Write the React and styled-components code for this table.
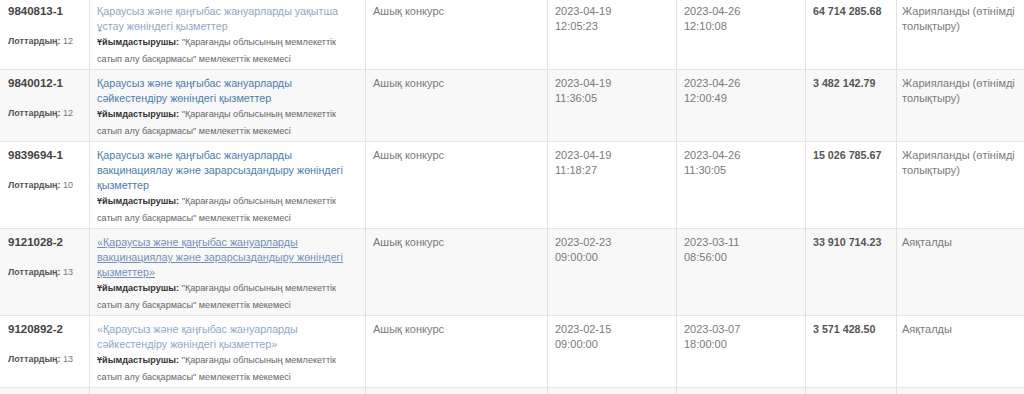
import React from "react";
import styled, { createGlobalStyle } from "styled-components";

const GlobalStyle = createGlobalStyle`
  html, body { margin: 0; padding: 0; background: #fff; overflow: hidden; }
  body { font-family: "Liberation Sans", Arial, sans-serif; }
`;

const Table = styled.table`
  width: 1040px;
  margin-top: -2px;
  border-collapse: separate;
  border-spacing: 0;
  table-layout: fixed;
  font-family: "Liberation Sans", Arial, sans-serif;
`;

const Row = styled.tr`
  background: ${(p) => (p.$striped ? "#f8f8f8" : "#ffffff")};
`;

const Cell = styled.td`
  vertical-align: top;
  padding: 6px 7px 1px 7px;
  border-right: 1px solid #e2e2e2;
  border-bottom: 1px solid #e6e6e6;
  font-size: 11px;
  line-height: 15px;
  color: #7a7a7a;
  &:first-child { padding-left: 8px; }
  &:last-child { padding-left: 5px; }
`;

const Code = styled.div`
  font-size: 11.5px;
  font-weight: bold;
  color: #444;
  line-height: 15px;
  margin-bottom: 14px;
`;

const Lots = styled.div`
  font-size: 9px;
  line-height: 17px;
  color: #777;
  b { color: #555; }
`;

const Title = styled.a`
  display: block;
  font-size: 10.75px;
  line-height: 15px;
  color: ${(p) =>
    p.$tone === "light" ? "#8ea8c6" : p.$tone === "visited" ? "#7290b8" : "#4a7db4"};
  text-decoration: ${(p) => (p.$tone === "visited" ? "underline" : "none")};
`;

const Org = styled.div`
  font-size: 9.1px;
  line-height: 17px;
  color: #666;
  b { color: #333; }
`;

const Amount = styled.span`
  font-size: 10.7px;
  font-weight: bold;
  color: #555;
`;

const rows = [
  {
    code: "9840813-1", lots: 12, tone: "light",
    title: "Қараусыз және қаңғыбас жануарларды уақытша ұстау жөніндегі қызметтер",
    start: ["2023-04-19", "12:05:23"], end: ["2023-04-26", "12:10:08"],
    amount: "64 714 285.68", status: "Жарияланды (өтінімді толықтыру)",
  },
  {
    code: "9840012-1", lots: 12, tone: "normal",
    title: "Қараусыз және қаңғыбас жануарларды сәйкестендіру жөніндегі қызметтер",
    start: ["2023-04-19", "11:36:05"], end: ["2023-04-26", "12:00:49"],
    amount: "3 482 142.79", status: "Жарияланды (өтінімді толықтыру)",
  },
  {
    code: "9839694-1", lots: 10, tone: "normal",
    title: "Қараусыз және қаңғыбас жануарларды вакцинациялау және зарарсыздандыру жөніндегі қызметтер",
    start: ["2023-04-19", "11:18:27"], end: ["2023-04-26", "11:30:05"],
    amount: "15 026 785.67", status: "Жарияланды (өтінімді толықтыру)",
  },
  {
    code: "9121028-2", lots: 13, tone: "visited",
    title: "«Қараусыз және қаңғыбас жануарларды вакцинациялау және зарарсыздандыру жөніндегі қызметтер»",
    start: ["2023-02-23", "09:00:00"], end: ["2023-03-11", "08:56:00"],
    amount: "33 910 714.23", status: "Аяқталды",
  },
  {
    code: "9120892-2", lots: 13, tone: "light",
    title: "«Қараусыз және қаңғыбас жануарларды сәйкестендіру жөніндегі қызметтер»",
    start: ["2023-02-15", "09:00:00"], end: ["2023-03-07", "18:00:00"],
    amount: "3 571 428.50", status: "Аяқталды",
  },
];

const ORG = "\"Қарағанды облысының мемлекеттік сатып алу басқармасы\" мемлекеттік мекемесі";

export default function App() {
  return (
    <>
      <GlobalStyle />
      <Table>
        <colgroup>
          <col style={{ width: 90 }} />
          <col style={{ width: 276 }} />
          <col style={{ width: 182 }} />
          <col style={{ width: 129 }} />
          <col style={{ width: 129 }} />
          <col style={{ width: 91 }} />
          <col style={{ width: 143 }} />
        </colgroup>
        <tbody>
          {rows.map((r, i) => (
            <Row key={r.code} $striped={i % 2 === 1}>
              <Cell>
                <Code>{r.code}</Code>
                <Lots><b>Лоттардың:</b> {r.lots}</Lots>
              </Cell>
              <Cell>
                <Title href="#" $tone={r.tone}>{r.title}</Title>
                <Org><b>Ұйымдастырушы:</b> {ORG}</Org>
              </Cell>
              <Cell>Ашық конкурс</Cell>
              <Cell>{r.start[0]}<br />{r.start[1]}</Cell>
              <Cell>{r.end[0]}<br />{r.end[1]}</Cell>
              <Cell><Amount>{r.amount}</Amount></Cell>
              <Cell>{r.status}</Cell>
            </Row>
          ))}
          <Row $striped>
            <Cell><Code>&nbsp;</Code></Cell>
            <Cell />
            <Cell />
            <Cell />
            <Cell />
            <Cell />
            <Cell />
          </Row>
        </tbody>
      </Table>
    </>
  );
}
